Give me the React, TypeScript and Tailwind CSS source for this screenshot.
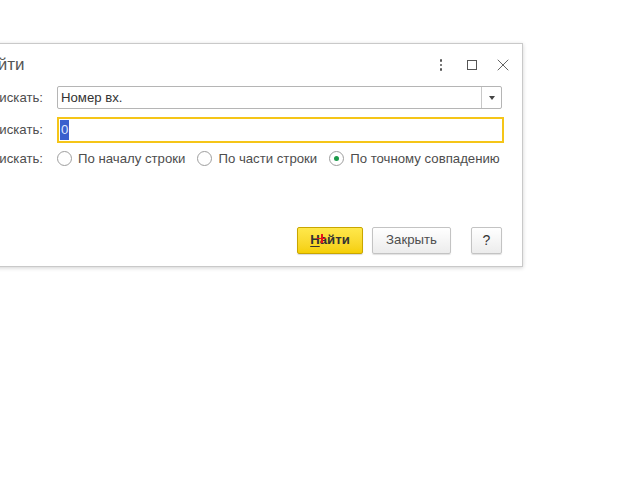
import { X } from "lucide-react";

function Radio({ label, checked }: { label: string; checked?: boolean }) {
  return (
    <label className="flex shrink-0 items-center gap-[6px] whitespace-nowrap">
      <span className="flex h-[15px] w-[15px] shrink-0 items-center justify-center rounded-full border border-[#9e9e9e] bg-white">
        {checked && <span className="h-[5px] w-[5px] rounded-full bg-[#1c9a4a]" />}
      </span>
      <span>{label}</span>
    </label>
  );
}

export default function App() {
  return (
    <div
      className="min-h-[480px] bg-white pt-[43px] text-[13.2px] text-[#4d4d4d]"
      style={{ fontFamily: '"Liberation Sans", Arial, sans-serif' }}
    >
      <div className="ml-[-36px] h-[224px] w-[559px] border border-[#c9c9c9] bg-white shadow-[0_1px_4px_rgba(0,0,0,0.18)]">
        {/* Header */}
        <div className="flex h-[42px] items-center pl-[11px] pr-[9px]">
          <span className="text-[17px] text-[#555]">Найти</span>
          <div className="ml-auto flex items-center text-[#555]">
            <div className="flex w-[14px] flex-col items-center gap-[2px]">
              <span className="h-[2.5px] w-[2.5px] rounded-full bg-[#555]" />
              <span className="h-[2.5px] w-[2.5px] rounded-full bg-[#555]" />
              <span className="h-[2.5px] w-[2.5px] rounded-full bg-[#555]" />
            </div>
            <span className="ml-[19px] h-[10px] w-[10px] border border-[#555]" />
            <X className="ml-[16px] h-[20px] w-[20px]" strokeWidth={1.1} />
          </div>
        </div>

        {/* Form */}
        <div className="grid grid-cols-[78px_minmax(0,1fr)] items-center gap-x-[14px] pr-[20px]">
          <span className="whitespace-nowrap text-right">Где искать:</span>
          <div className="flex h-[23px] items-center rounded-[2px] border border-[#b5b5b5] bg-white">
            <span className="flex-1 pl-[3px] text-[#333]">Номер вх.</span>
            <span className="flex h-full w-[20px] items-center justify-center border-l border-[#c8c8c8]">
              <span className="h-0 w-0 border-x-[3px] border-t-[4px] border-x-transparent border-t-[#444]" />
            </span>
          </div>

          <span className="mt-[8px] whitespace-nowrap text-right">Что искать:</span>
          <div className="mr-[-2px] mt-[8px] flex h-[26px] items-center border-2 border-[#f5c518] bg-white pl-[1px]">
            <span className="bg-[#3a5fcd] px-[1px] text-[#dfe6ff]">0</span>
          </div>

          <span className="mt-[6px] whitespace-nowrap text-right">Как искать:</span>
          <div className="mt-[6px] flex items-center whitespace-nowrap">
            <Radio label="По началу строки" />
            <span className="ml-[12px] shrink-0">
              <Radio label="По части строки" />
            </span>
            <span className="ml-[12px] shrink-0">
              <Radio label="По точному совпадению" checked />
            </span>
          </div>
        </div>

        {/* Buttons */}
        <div className="mt-[58px] flex items-center pr-[20px]">
          <div className="ml-auto flex items-center">
            <button className="relative h-[27px] w-[66px] rounded-[2px] border border-[#c9a600] bg-gradient-to-b from-[#ffe84a] to-[#f5cf00] font-bold text-[#333] shadow-[0_1px_1px_rgba(0,0,0,0.15)]">
              <span className="underline underline-offset-2">Н</span>айти
              <span className="absolute left-[19px] top-[10px] h-[1.5px] w-[9px] bg-[#e8141c]" />
              <span className="absolute left-[23px] top-[6px] h-[9px] w-[1.5px] bg-[#e8141c]" />
            </button>
            <button className="ml-[9px] h-[27px] w-[79px] rounded-[2px] border border-[#c3c3c3] bg-gradient-to-b from-white to-[#ececec] text-[#4d4d4d] shadow-[0_1px_1px_rgba(0,0,0,0.12)]">
              Закрыть
            </button>
            <button className="ml-[20px] h-[27px] w-[31px] rounded-[2px] border border-[#c3c3c3] bg-gradient-to-b from-white to-[#ececec] text-[14px] text-[#333] shadow-[0_1px_1px_rgba(0,0,0,0.12)]">
              ?
            </button>
          </div>
        </div>
      </div>
    </div>
  );
}
